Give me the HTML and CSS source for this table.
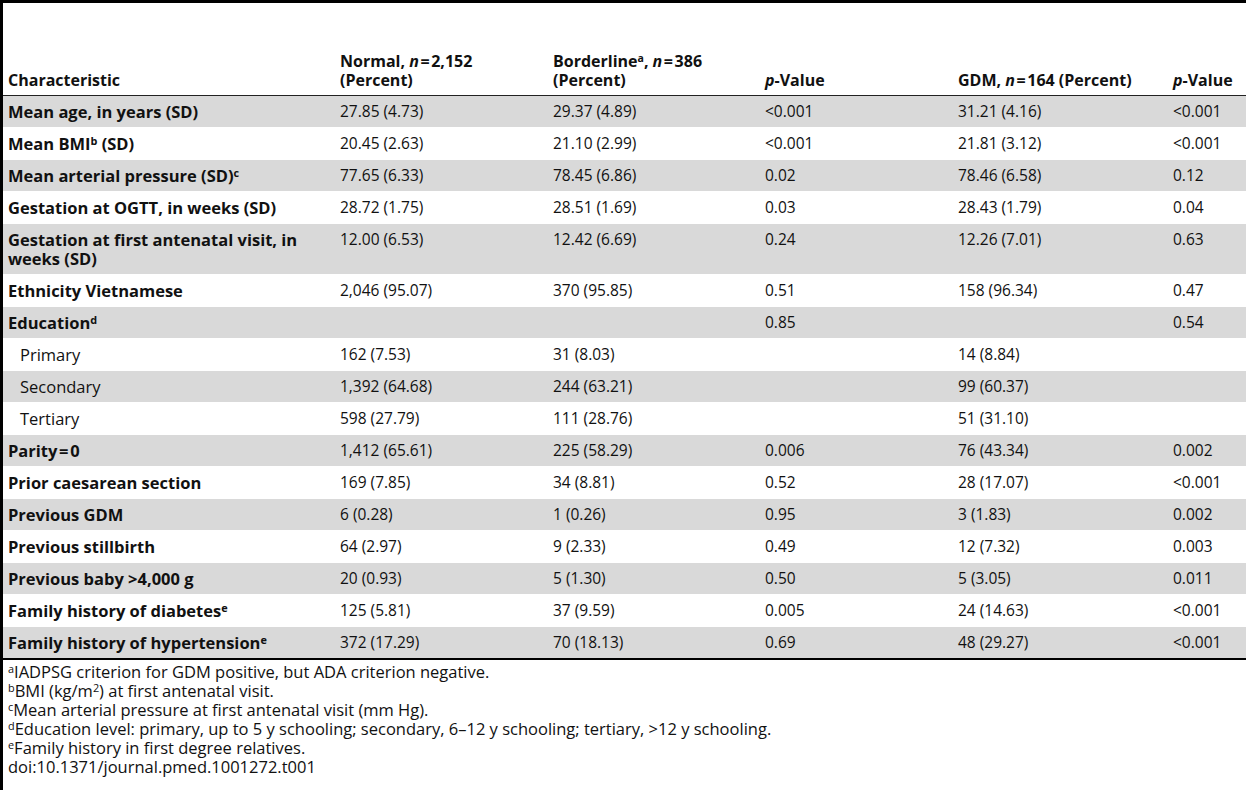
FILE: index.html
```html
<!DOCTYPE html>
<html lang="en">
<head>
<meta charset="UTF-8">
<meta name="viewport" content="width=device-width, initial-scale=1.0">
<title>Table 1. Characteristics of participants</title>
<link rel="stylesheet" href="styles.css">
</head>
<body>

<div class="frame">
    <table class="data-table">
        <colgroup>
            <col class="col-name">
            <col class="col-normal">
            <col class="col-border">
            <col class="col-p1">
            <col class="col-gdm">
            <col class="col-p2">
        </colgroup>
        <thead>
            <tr class="caption-row"><td colspan="6"></td></tr>
            <tr class="head-row">
                <th>Characteristic</th>
                <th>Normal, <i>n</i>&#8202;=&#8202;2,152<br>(Percent)</th>
                <th>Borderline<sup>a</sup>, <i>n</i>&#8202;=&#8202;386<br>(Percent)</th>
                <th><i>p</i>-Value</th>
                <th>GDM, <i>n</i>&#8202;=&#8202;164 (Percent)</th>
                <th><i>p</i>-Value</th>
            </tr>
        </thead>
        <tbody>
            <tr class="shade"><td class="label">Mean age, in years (SD)</td><td>27.85 (4.73)</td><td>29.37 (4.89)</td><td>&lt;0.001</td><td>31.21 (4.16)</td><td>&lt;0.001</td></tr>
            <tr><td class="label">Mean BMI<sup>b</sup> (SD)</td><td>20.45 (2.63)</td><td>21.10 (2.99)</td><td>&lt;0.001</td><td>21.81 (3.12)</td><td>&lt;0.001</td></tr>
            <tr class="shade"><td class="label">Mean arterial pressure (SD)<sup>c</sup></td><td>77.65 (6.33)</td><td>78.45 (6.86)</td><td>0.02</td><td>78.46 (6.58)</td><td>0.12</td></tr>
            <tr><td class="label">Gestation at OGTT, in weeks (SD)</td><td>28.72 (1.75)</td><td>28.51 (1.69)</td><td>0.03</td><td>28.43 (1.79)</td><td>0.04</td></tr>
            <tr class="shade"><td class="label">Gestation at first antenatal visit, in weeks (SD)</td><td>12.00 (6.53)</td><td>12.42 (6.69)</td><td>0.24</td><td>12.26 (7.01)</td><td>0.63</td></tr>
            <tr><td class="label">Ethnicity Vietnamese</td><td>2,046 (95.07)</td><td>370 (95.85)</td><td>0.51</td><td>158 (96.34)</td><td>0.47</td></tr>
            <tr class="shade"><td class="label">Education<sup>d</sup></td><td></td><td></td><td>0.85</td><td></td><td>0.54</td></tr>
            <tr><td class="sub">Primary</td><td>162 (7.53)</td><td>31 (8.03)</td><td></td><td>14 (8.84)</td><td></td></tr>
            <tr class="shade"><td class="sub">Secondary</td><td>1,392 (64.68)</td><td>244 (63.21)</td><td></td><td>99 (60.37)</td><td></td></tr>
            <tr><td class="sub">Tertiary</td><td>598 (27.79)</td><td>111 (28.76)</td><td></td><td>51 (31.10)</td><td></td></tr>
            <tr class="shade"><td class="label">Parity&#8202;=&#8202;0</td><td>1,412 (65.61)</td><td>225 (58.29)</td><td>0.006</td><td>76 (43.34)</td><td>0.002</td></tr>
            <tr><td class="label">Prior caesarean section</td><td>169 (7.85)</td><td>34 (8.81)</td><td>0.52</td><td>28 (17.07)</td><td>&lt;0.001</td></tr>
            <tr class="shade"><td class="label">Previous GDM</td><td>6 (0.28)</td><td>1 (0.26)</td><td>0.95</td><td>3 (1.83)</td><td>0.002</td></tr>
            <tr><td class="label">Previous stillbirth</td><td>64 (2.97)</td><td>9 (2.33)</td><td>0.49</td><td>12 (7.32)</td><td>0.003</td></tr>
            <tr class="shade"><td class="label">Previous baby &gt;4,000 g</td><td>20 (0.93)</td><td>5 (1.30)</td><td>0.50</td><td>5 (3.05)</td><td>0.011</td></tr>
            <tr><td class="label">Family history of diabetes<sup>e</sup></td><td>125 (5.81)</td><td>37 (9.59)</td><td>0.005</td><td>24 (14.63)</td><td>&lt;0.001</td></tr>
            <tr class="shade"><td class="label">Family history of hypertension<sup>e</sup></td><td>372 (17.29)</td><td>70 (18.13)</td><td>0.69</td><td>48 (29.27)</td><td>&lt;0.001</td></tr>
        </tbody>
    </table>

    <div class="notes">
        <div><sup>a</sup>IADPSG criterion for GDM positive, but ADA criterion negative.</div>
        <div><sup>b</sup>BMI (kg/m<sup>2</sup>) at first antenatal visit.</div>
        <div><sup>c</sup>Mean arterial pressure at first antenatal visit (mm Hg).</div>
        <div><sup>d</sup>Education level: primary, up to 5 y schooling; secondary, 6&ndash;12 y schooling; tertiary, &gt;12 y schooling.</div>
        <div><sup>e</sup>Family history in first degree relatives.</div>
        <div>doi:10.1371/journal.pmed.1001272.t001</div>
    </div>
</div>

</body>
</html>
```

FILE: styles.css
```css
/* Page */
body {
    margin: 0;
    font-family: "Open Sans", "Noto Sans", sans-serif;
    font-size: 16px;
    color: #111;
    background: #fff;
}

.frame {
    border-top: 3px solid #000;
    border-left: 3px solid #000;
    min-height: 787px;
}

/* Table */
.data-table {
    width: 100%;
    border-collapse: collapse;
    table-layout: fixed;
    border-bottom: 2px solid #000;
}

.col-name { width: 332px; }
.col-normal { width: 213px; }
.col-border { width: 212px; }
.col-p1 { width: 193px; }
.col-gdm { width: 215px; }

.caption-row {
    height: 30px;
}

.caption-row td {
    padding: 0;
    border-bottom: 1px solid #222;
}

.head-row {
    height: 62px;
}

.head-row th {
    padding: 0 5px 5px;
    text-align: left;
    vertical-align: bottom;
    font-weight: bold;
    line-height: 19px;
    border-bottom: 1px solid #222;
}

.data-table td {
    padding: 6px 5px;
    font-size: 15.5px;
    line-height: 19px;
    vertical-align: top;
    border-bottom: 1px solid #fff;
}

.data-table tbody tr:last-child td {
    border-bottom: none;
}

.shade td {
    background: #d9d9d9;
}

.data-table td.label {
    font-size: 16.5px;
    font-weight: bold;
}

.data-table td.sub {
    font-size: 16.5px;
    padding-left: 17px;
}

sup {
    font-size: 0.66em;
    line-height: 0;
    vertical-align: 0.5em;
}

/* Footnotes */
.notes {
    padding: 2px 5px 0;
    font-size: 16.5px;
    line-height: 19px;
}
```
